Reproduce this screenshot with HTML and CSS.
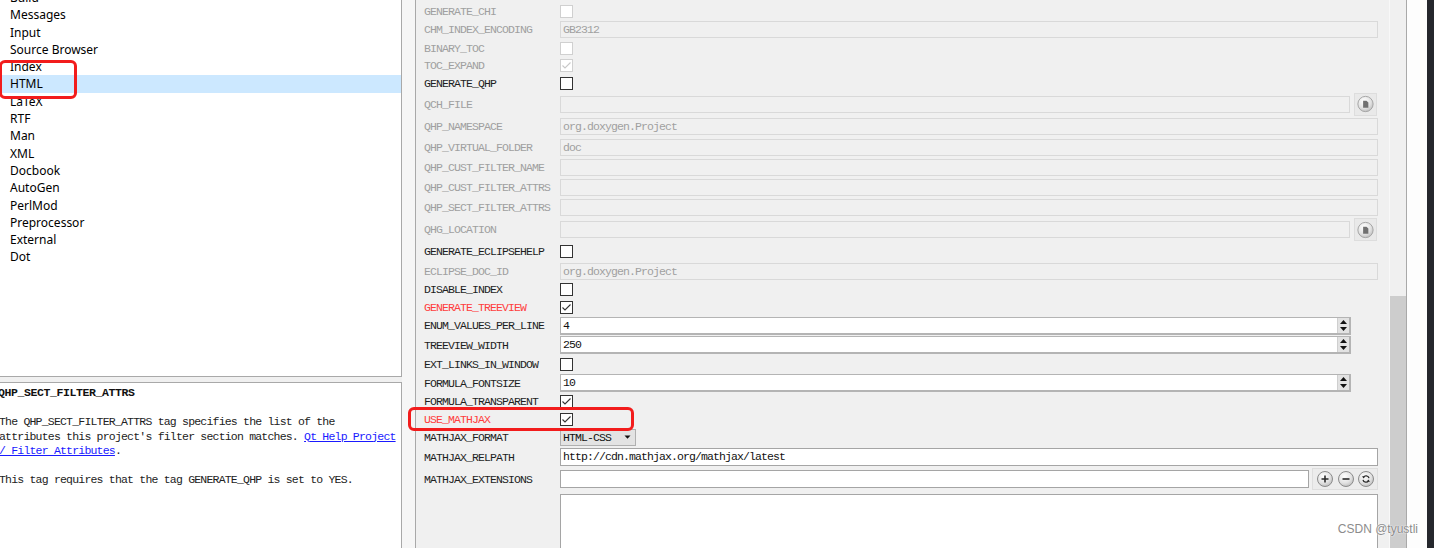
FILE: index.html
```html
<!DOCTYPE html>
<html>
<head>
<meta charset="utf-8">
<title>Doxywizard - HTML</title>
<link rel="stylesheet" href="styles.css">
</head>
<body>
<svg width="0" height="0" class="defs">
  <defs>
    <radialGradient id="knob" cx="40%" cy="32%" r="75%">
      <stop offset="0" stop-color="#ffffff"/>
      <stop offset="0.6" stop-color="#e2e2e2"/>
      <stop offset="1" stop-color="#b9b9b9"/>
    </radialGradient>
  </defs>
</svg>
<div class="app">
  <div class="left">
    <div class="nav">
      <ul class="tree">
        <li>Build</li>
        <li>Messages</li>
        <li>Input</li>
        <li>Source Browser</li>
        <li>Index</li>
        <li class="sel">HTML</li>
        <li>LaTeX</li>
        <li>RTF</li>
        <li>Man</li>
        <li>XML</li>
        <li>Docbook</li>
        <li>AutoGen</li>
        <li>PerlMod</li>
        <li>Preprocessor</li>
        <li>External</li>
        <li>Dot</li>
      </ul>
    </div>
    <div class="help">
      <h1 class="help-title">QHP_SECT_FILTER_ATTRS</h1>
      <p class="help-text">The QHP_SECT_FILTER_ATTRS tag specifies the list of the<br>attributes this project's filter section matches. <a class="help-link" href="#">Qt Help Project<br>/ Filter Attributes</a>.</p>
      <p class="help-text">This tag requires that the tag GENERATE_QHP is set to YES.</p>
    </div>
  </div>
  <div class="splitter"></div>
  <div class="right">
    <div class="form">
      <div class="lbl off">GENERATE_CHI</div>
      <div class="cell"><span class="cb off"></span></div>

      <div class="lbl off">CHM_INDEX_ENCODING</div>
      <div class="cell"><div class="txt full">GB2312</div></div>

      <div class="lbl off">BINARY_TOC</div>
      <div class="cell"><span class="cb off"></span></div>

      <div class="lbl off">TOC_EXPAND</div>
      <div class="cell"><span class="cb off"><svg class="tick" viewBox="0 0 11 11"><polyline points="1.5,5.5 4,8 9.5,2.5"/></svg></span></div>

      <div class="lbl">GENERATE_QHP</div>
      <div class="cell"><span class="cb"></span></div>

      <div class="lbl off">QCH_FILE</div>
      <div class="cell fileline">
        <div class="txt short"></div>
        <span class="filebtn"><svg viewBox="0 0 22 22" width="22" height="22"><circle cx="11" cy="11" r="8" fill="url(#knob)" stroke="#a3a3a3"/><path d="M8.5 7.5h3.5l2 2v5.5h-5.5z" fill="#707070"/></svg></span>
      </div>

      <div class="lbl off">QHP_NAMESPACE</div>
      <div class="cell"><div class="txt full">org.doxygen.Project</div></div>

      <div class="lbl off">QHP_VIRTUAL_FOLDER</div>
      <div class="cell"><div class="txt full">doc</div></div>

      <div class="lbl off">QHP_CUST_FILTER_NAME</div>
      <div class="cell"><div class="txt full"></div></div>

      <div class="lbl off">QHP_CUST_FILTER_ATTRS</div>
      <div class="cell"><div class="txt full"></div></div>

      <div class="lbl off">QHP_SECT_FILTER_ATTRS</div>
      <div class="cell"><div class="txt full"></div></div>

      <div class="lbl off">QHG_LOCATION</div>
      <div class="cell fileline">
        <div class="txt short"></div>
        <span class="filebtn"><svg viewBox="0 0 22 22" width="22" height="22"><circle cx="11" cy="11" r="8" fill="url(#knob)" stroke="#a3a3a3"/><path d="M8.5 7.5h3.5l2 2v5.5h-5.5z" fill="#707070"/></svg></span>
      </div>

      <div class="lbl">GENERATE_ECLIPSEHELP</div>
      <div class="cell"><span class="cb"></span></div>

      <div class="lbl off">ECLIPSE_DOC_ID</div>
      <div class="cell"><div class="txt full">org.doxygen.Project</div></div>

      <div class="lbl">DISABLE_INDEX</div>
      <div class="cell"><span class="cb"></span></div>

      <div class="lbl hot">GENERATE_TREEVIEW</div>
      <div class="cell"><span class="cb"><svg class="tick" viewBox="0 0 11 11"><polyline points="1.5,5.5 4,8 9.5,2.5"/></svg></span></div>

      <div class="lbl">ENUM_VALUES_PER_LINE</div>
      <div class="cell"><div class="spin"><span class="spin-val">4</span><span class="spin-arrows"><svg viewBox="0 0 11 15" width="11" height="15"><path d="M2 6h7L5.5 2z M2 9h7L5.5 13z" fill="#111"/></svg></span></div></div>

      <div class="lbl">TREEVIEW_WIDTH</div>
      <div class="cell"><div class="spin"><span class="spin-val">250</span><span class="spin-arrows"><svg viewBox="0 0 11 15" width="11" height="15"><path d="M2 6h7L5.5 2z M2 9h7L5.5 13z" fill="#111"/></svg></span></div></div>

      <div class="lbl">EXT_LINKS_IN_WINDOW</div>
      <div class="cell"><span class="cb"></span></div>

      <div class="lbl">FORMULA_FONTSIZE</div>
      <div class="cell"><div class="spin"><span class="spin-val">10</span><span class="spin-arrows"><svg viewBox="0 0 11 15" width="11" height="15"><path d="M2 6h7L5.5 2z M2 9h7L5.5 13z" fill="#111"/></svg></span></div></div>

      <div class="lbl">FORMULA_TRANSPARENT</div>
      <div class="cell"><span class="cb"><svg class="tick" viewBox="0 0 11 11"><polyline points="1.5,5.5 4,8 9.5,2.5"/></svg></span></div>

      <div class="lbl hot">USE_MATHJAX</div>
      <div class="cell"><span class="cb"><svg class="tick" viewBox="0 0 11 11"><polyline points="1.5,5.5 4,8 9.5,2.5"/></svg></span></div>

      <div class="lbl">MATHJAX_FORMAT</div>
      <div class="cell"><div class="combo"><span class="combo-val">HTML-CSS</span><svg viewBox="0 0 7 4" width="7" height="4"><path d="M0.5 0.5h6L3.5 3.8z" fill="#111"/></svg></div></div>

      <div class="lbl">MATHJAX_RELPATH</div>
      <div class="cell"><div class="txt on full">http://cdn.mathjax.org/mathjax/latest</div></div>

      <div class="lbl">MATHJAX_EXTENSIONS</div>
      <div class="cell extline">
        <div class="txt on ext"></div>
        <div class="rbtns">
          <svg viewBox="0 0 18 18" width="18" height="18"><circle cx="9" cy="9" r="7.5" fill="url(#knob)" stroke="#8c8c8c"/><path d="M5.5 9h7M9 5.5v7" stroke="#2b2b2b" stroke-width="1.6"/></svg>
          <svg viewBox="0 0 18 18" width="18" height="18"><circle cx="9" cy="9" r="7.5" fill="url(#knob)" stroke="#8c8c8c"/><path d="M5.5 9h7" stroke="#2b2b2b" stroke-width="1.6"/></svg>
          <svg viewBox="0 0 18 18" width="18" height="18"><circle cx="9" cy="9" r="7.5" fill="url(#knob)" stroke="#8c8c8c"/><path d="M12 8.2a3 3 0 0 0-5.6-0.8M6 9.8a3 3 0 0 0 5.6 0.8" fill="none" stroke="#2b2b2b" stroke-width="1.3"/><path d="M5 6.2l1.6 2.2 1.4-2z M13 11.8l-1.6-2.2-1.4 2z" fill="#2b2b2b"/></svg>
        </div>
      </div>

      <div class="lbl"></div>
      <div class="cell area-cell"><div class="area"></div></div>
    </div>
    <div class="vscroll"><div class="thumb"></div></div>
  </div>
  <div class="edge"></div>
  <div class="frame"></div>
</div>
<div class="mark mark-html"></div>
<div class="mark mark-mathjax"></div>
<div class="watermark">CSDN @tyustli</div>
</body>
</html>
```
FILE: styles.css
```css
html, body {
  margin: 0;
  padding: 0;
}
body {
  width: 1434px;
  height: 548px;
  overflow: hidden;
  position: relative;
  background: #f0f0f0;
}
.defs {
  position: absolute;
  width: 0;
  height: 0;
}
.app {
  display: flex;
  height: 548px;
}

/* ---------- left side ---------- */
.left {
  width: 402px;
  flex: none;
  display: flex;
  flex-direction: column;
  background: #f0f0f0;
}
.nav {
  height: 377px;
  box-sizing: border-box;
  background: #fff;
  border-right: 1px solid #a9a9a9;
  border-bottom: 1px solid #a9a9a9;
  overflow: hidden;
}
.tree {
  list-style: none;
  margin: -11px 0 0;
  padding: 0;
  font-family: "Noto Sans", "Open Sans", sans-serif;
  font-size: 12px;
  color: #000;
}
.tree li {
  height: 17.3px;
  line-height: 17.3px;
  padding-left: 10px;
  white-space: nowrap;
}
.tree li.sel {
  background: #cce8ff;
}
.help {
  flex: 1;
  margin-top: 5px;
  background: #fff;
  border-top: 1px solid #a9a9a9;
  border-right: 1px solid #a9a9a9;
  padding-top: 3px;
  overflow: hidden;
  font-family: "Liberation Mono", monospace;
  font-size: 11.5px;
  line-height: 14.5px;
  color: #222;
}
.help-title {
  margin: 0 0 14.5px -2px;
  font-size: 11.5px;
  font-weight: bold;
  letter-spacing: -0.4px;
  line-height: 14.5px;
  color: #111;
}
.help-text {
  margin: 0 0 14.5px -1px;
  letter-spacing: -0.8px;
  white-space: nowrap;
}
.help-link {
  color: #1a1aff;
  text-decoration: underline;
}

.splitter {
  width: 13px;
  flex: none;
  background: #f6f6f6;
}

/* ---------- right side ---------- */
.right {
  width: 992px;
  flex: none;
  box-sizing: border-box;
  border-left: 1px solid #a9a9a9;
  border-right: 1px solid #a9a9a9;
  display: flex;
  background: #f0f0f0;
}
.form {
  width: 973px;
  box-sizing: border-box;
  padding: 2px 11px 0 8px;
  display: grid;
  grid-template-columns: 136px 818px;
  grid-template-rows: 18px 19px 18px 17px 18px 24px 21px 20px 20px 20px 20px 25px 19px 20px 17px 18px 19px 20px 18px 20px 17px 18px 18px 22px 22px 80px;
  align-items: center;
  justify-items: start;
}
.lbl {
  font-family: "Liberation Mono", monospace;
  font-size: 11.5px;
  letter-spacing: -0.9px;
  color: #1e1e1e;
  white-space: nowrap;
}
.lbl.off {
  color: #a0a0a0;
}
.lbl.hot {
  color: #ff3d3d;
}
.cell {
  display: flex;
  align-items: center;
}
.cb {
  width: 13px;
  height: 13px;
  box-sizing: border-box;
  border: 1px solid #333;
  background: #fff;
  display: flex;
  align-items: center;
  justify-content: center;
}
.cb.off {
  border-color: #d0d0d0;
}
.tick {
  width: 11px;
  height: 11px;
}
.tick polyline {
  fill: none;
  stroke: #333;
  stroke-width: 1.1;
}
.cb.off .tick polyline {
  stroke: #c8c8c8;
}
.txt {
  box-sizing: border-box;
  height: 17px;
  border: 1px solid #d9d9d9;
  background: #f0f0f0;
  padding-left: 2px;
  font-family: "Liberation Mono", monospace;
  font-size: 11.5px;
  letter-spacing: -0.9px;
  line-height: 15px;
  color: #a0a0a0;
  white-space: nowrap;
  overflow: hidden;
}
.txt.on {
  height: 18px;
  line-height: 16px;
  background: #fff;
  border-color: #a5a5a5;
  color: #111;
}
.full {
  width: 818px;
}
.short {
  width: 790px;
}
.fileline {
  gap: 4px;
}
.filebtn {
  width: 23px;
  height: 23px;
  box-sizing: border-box;
  background: #e9e9e9;
  border: 1px solid #dddddd;
  display: flex;
  align-items: center;
  justify-content: center;
}
.spin {
  width: 791px;
  height: 18px;
  box-sizing: border-box;
  border: 1px solid #b4b4b4;
  border-right-width: 2px;
  border-bottom-width: 2px;
  background: #fff;
  display: flex;
}
.spin-val {
  flex: 1;
  padding-left: 2px;
  font-family: "Liberation Mono", monospace;
  font-size: 11.5px;
  letter-spacing: -0.9px;
  line-height: 15px;
  color: #111;
}
.spin-arrows {
  width: 11px;
  background: #e2e2e2;
  border-left: 1px solid #cfcfcf;
  display: flex;
  align-items: center;
}
.combo {
  width: 76px;
  height: 17px;
  box-sizing: border-box;
  border: 1px solid #b0b0b0;
  background: #e3e3e3;
  display: flex;
  align-items: center;
  justify-content: space-between;
  padding: 0 4px 0 2px;
}
.combo-val {
  font-family: "Liberation Mono", monospace;
  font-size: 11.5px;
  letter-spacing: -0.9px;
  color: #111;
}
.extline {
  gap: 3px;
}
.ext {
  width: 749px;
}
.rbtns {
  width: 66px;
  height: 22px;
  box-sizing: border-box;
  border: 1px solid #dedede;
  background: #ececec;
  display: flex;
  align-items: center;
  justify-content: space-between;
  padding: 0 2px 0 3px;
}
.area-cell {
  align-self: start;
}
.area {
  width: 818px;
  height: 80px;
  margin-top: 4px;
  box-sizing: border-box;
  background: #fff;
  border: 1px solid #a5a5a5;
}
.vscroll {
  width: 17px;
  box-sizing: border-box;
  border-left: 1px solid #f8f8f8;
  background: #f0f0f0;
  display: flex;
  flex-direction: column;
}
.thumb {
  margin-top: 296px;
  flex: 1;
  background: #cdcdcd;
}
.edge {
  width: 20px;
  flex: none;
  background: #fdfdfd;
}
.frame {
  width: 7px;
  flex: none;
  background: #25272d;
}

/* ---------- overlays ---------- */
.mark {
  position: absolute;
  box-sizing: border-box;
  border: 3px solid #f21c1c;
  border-radius: 6px;
}
.mark-html {
  left: -1px;
  top: 60px;
  width: 78px;
  height: 39px;
}
.mark-mathjax {
  left: 408px;
  top: 407px;
  width: 226px;
  height: 24px;
}
.watermark {
  position: absolute;
  right: 16px;
  top: 522px;
  font-family: "Liberation Sans", Arial, sans-serif;
  font-size: 12px;
  color: #8c8c8c;
  text-shadow: 0 0 2px #fff, 0 0 1px #fff;
}
```
